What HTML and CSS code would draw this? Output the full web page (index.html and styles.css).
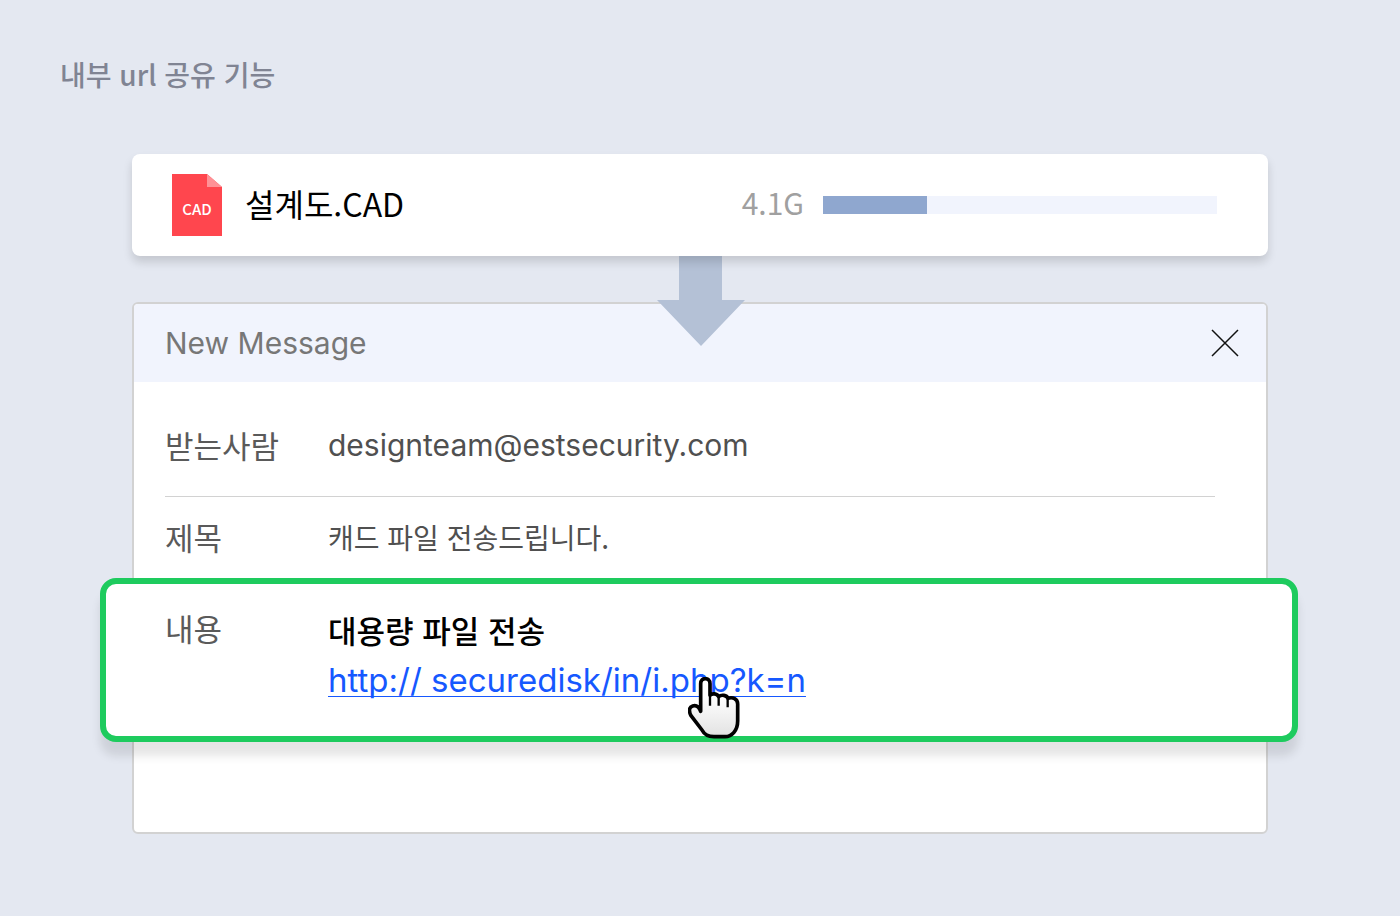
FILE: index.html
```
<!DOCTYPE html>
<html lang="ko">
<head>
    <meta charset="UTF-8">
    <meta name="viewport" content="width=device-width, initial-scale=1.0">
    <title>내부 url 공유 기능</title>
    <link rel="stylesheet" href="styles.css">
</head>
<body>
    <h1 class="title">내부 url 공유 기능</h1>
    <main class="container">
        <div class="file-card">
            <div class="file-icon">
                <svg viewBox="0 0 50 62" aria-hidden="true">
                    <path d="M0 0h35l15 13v49H0z" fill="#ff464e"/>
                    <path d="M35 0l15 13H35z" fill="#ff9196"/>
                </svg>
                <span>CAD</span>
            </div>
            <label class="file-name" for="upload">설계도.CAD</label>
            <span class="file-size">4.1G</span>
            <progress id="upload" class="file-progress" value="26.5" max="100"></progress>
        </div>

        <form class="message">
            <svg class="arrow" viewBox="0 0 88 92" aria-hidden="true">
                <path d="M22 0h43v46h23L44 92 0 46h22z" fill="#b4c1d6"/>
            </svg>
            <div class="message-header">
                <h2>New Message</h2>
                <button type="button" class="close" aria-label="닫기">
                    <svg viewBox="0 0 28 28"><path d="M1 1l26 26M27 1L1 27" stroke="#111" stroke-width="1.5"/></svg>
                </button>
            </div>
            <div class="fields">
                <div class="row row-to">
                    <label for="to">받는사람</label>
                    <input type="email" id="to" value="designteam@estsecurity.com">
                </div>
                <div class="row row-subject">
                    <label for="subject">제목</label>
                    <input type="text" id="subject" value="캐드 파일 전송드립니다.">
                </div>
            </div>
            <div class="content-box">
                <span class="content-label">내용</span>
                <div class="content">
                    <p>대용량 파일 전송</p>
                    <a href="#">http:// securedisk/in/i.php?k=n</a>
                    <svg class="cursor" viewBox="54 81 156 186" aria-hidden="true">
                        <defs>
                            <linearGradient id="hand" x1="0" y1="0" x2="0" y2="1">
                                <stop offset="0.3" stop-color="#fff"/>
                                <stop offset="1" stop-color="#e2e2e2"/>
                            </linearGradient>
                        </defs>
                        <path d="M92 184V101c0-20 28-20 28 0v35c6-7 21-6 26 4 8-7 24-5 28 5 14-5 29 2 29 17v51c0 28-17 47-38 47h-33c-18 0-29-6-36-20L63 197c-8-16-5-26 5-29 10-3 19 3 24 16z" fill="url(#hand)" stroke="#000" stroke-width="11" stroke-linejoin="round"/>
                        <path d="M120 135v32M146 139v28M173 144v28" fill="none" stroke="#000" stroke-width="7"/>
                    </svg>
                </div>
            </div>
        </form>
    </main>
</body>
</html>
```

FILE: styles.css
```
* {
    margin: 0;
    padding: 0;
    box-sizing: border-box;
}

body {
    font-family: "Noto Sans CJK KR", sans-serif;
    background-color: #e4e8f1;
    min-height: 100vh;
    padding: 54px 0 82px;
}

.title {
    padding: 0 60px;
    font-size: 28px;
    line-height: 40px;
    font-weight: 500;
    color: #808493;
}

.container {
    margin: 60px 132px 0;
}

.file-card {
    position: relative;
    z-index: 1;
    display: flex;
    align-items: center;
    height: 102px;
    padding: 0 51px 0 40px;
    background-color: #fff;
    border-radius: 8px;
    box-shadow: 0 6px 10px rgba(0, 0, 0, 0.14);
}

.file-icon {
    position: relative;
    width: 50px;
    height: 62px;
    margin-right: 23px;
}

.file-icon svg {
    display: block;
    width: 50px;
    height: 62px;
}

.file-icon span {
    position: absolute;
    left: 0;
    right: 0;
    top: 25px;
    font-size: 15px;
    line-height: 20px;
    font-weight: 500;
    text-align: center;
    color: #fff;
}

.file-name {
    flex: 1;
    padding-bottom: 4px;
    font-size: 32px;
    line-height: 40px;
    color: #000;
}

.file-size {
    margin-right: 19px;
    padding-bottom: 6px;
    font-size: 30px;
    line-height: 40px;
    color: #a0a0a0;
}

.file-progress {
    appearance: none;
    flex: 0 1 394px;
    height: 18px;
    border: none;
    background-color: #f1f4fd;
}

.file-progress::-webkit-progress-bar {
    background-color: #f1f4fd;
}

.file-progress::-webkit-progress-value {
    background-color: #8fa7cf;
}

.message {
    position: relative;
    margin-top: 46px;
    padding-bottom: 90px;
    background-color: #fff;
    border: 2px solid #d2d2d2;
    border-radius: 6px;
}

.arrow {
    position: absolute;
    left: 50%;
    top: -50px;
    width: 88px;
    height: 92px;
    margin-left: -43px;
}

.message-header {
    display: flex;
    align-items: center;
    justify-content: space-between;
    height: 78px;
    padding: 0 27px 0 31px;
    background-color: #f1f4fd;
    border-radius: 4px 4px 0 0;
}

.message-header h2 {
    font-family: Inter, sans-serif;
    font-size: 30px;
    line-height: 40px;
    font-weight: 400;
    color: #777;
}

.close {
    width: 28px;
    height: 28px;
    border: none;
    background: none;
    cursor: pointer;
}

.close svg {
    display: block;
    width: 28px;
    height: 28px;
}

.fields {
    padding: 18px 51px 0 31px;
}

.row {
    display: flex;
    align-items: center;
}

.row-to {
    height: 97px;
    padding-bottom: 6px;
    border-bottom: 1px solid #d2d2d2;
}

.row-subject {
    height: 81px;
    padding-bottom: 2px;
}

.row label,
.content-label {
    flex: none;
    width: 163px;
    font-size: 31px;
    line-height: 40px;
    color: #5a5a5a;
}

.row input {
    flex: 1;
    min-width: 0;
    height: 40px;
    border: none;
    outline: none;
    background: none;
    font-family: "Noto Sans CJK KR", sans-serif;
    font-size: 28px;
    color: #505050;
}

.row input[type="email"] {
    font-family: Inter, sans-serif;
    font-size: 30px;
}

.content-box {
    position: relative;
    display: flex;
    height: 164px;
    margin: 0 -32px 0 -34px;
    padding: 24px 59px;
    background-color: #fff;
    border: 6px solid #1ecb5e;
    border-radius: 16px;
    box-shadow: 0 14px 10px rgba(0, 0, 0, 0.1);
}

.content {
    position: relative;
    flex: 1;
    white-space: nowrap;
}

.content p {
    font-size: 31px;
    line-height: 44px;
    font-weight: 500;
    color: #000;
}

.content a {
    font-family: Inter, sans-serif;
    font-size: 33px;
    line-height: 56px;
    color: #1658ff;
    text-decoration-thickness: 1px;
    text-underline-offset: 4px;
    text-decoration-skip-ink: none;
}

.cursor {
    position: absolute;
    left: 360px;
    top: 69px;
    width: 52px;
    height: 62px;
}
```
